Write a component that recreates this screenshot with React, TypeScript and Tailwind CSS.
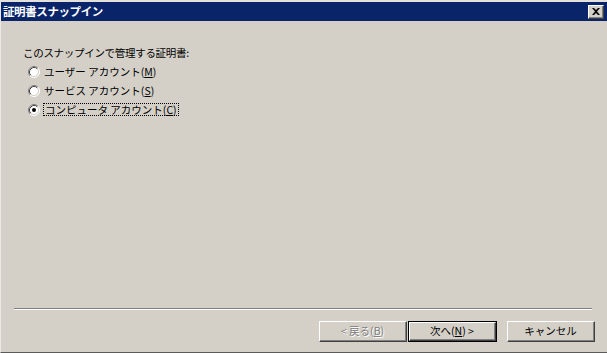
import React from "react";

const font = { fontFamily: '"Noto Sans CJK JP", "Noto Sans", sans-serif' };

function Radio({ checked }: { checked?: boolean }) {
  return (
    <svg width="12" height="12" viewBox="0 0 12 12" className="shrink-0">
      <circle cx="6" cy="6" r="5" fill="#ffffff" />
      <path d="M2.11 9.89 A5.5 5.5 0 0 1 9.89 2.11" fill="none" stroke="#808080" strokeWidth="1" />
      <path d="M9.89 2.11 A5.5 5.5 0 0 1 2.11 9.89" fill="none" stroke="#ffffff" strokeWidth="1" />
      <path d="M2.82 9.18 A4.5 4.5 0 0 1 9.18 2.82" fill="none" stroke="#404040" strokeWidth="1" />
      <path d="M9.18 2.82 A4.5 4.5 0 0 1 2.82 9.18" fill="none" stroke="#d4d0c8" strokeWidth="1" />
      {checked && <circle cx="6" cy="6" r="2" fill="#000" />}
    </svg>
  );
}

function Btn({
  children,
  isDefault,
  disabled,
}: {
  children: React.ReactNode;
  isDefault?: boolean;
  disabled?: boolean;
}) {
  const inner = (
    <div className="h-full w-full border-t border-l border-t-white border-l-white border-b border-r border-b-[#404040] border-r-[#404040]">
      <div
        className={
          "h-full w-full border-b border-r border-b-[#808080] border-r-[#808080] flex items-center justify-center text-[10.5px] leading-none " +
          (disabled ? "text-[#808080]" : "text-black")
        }
        style={disabled ? { ...font, textShadow: "1px 1px 0 #ffffff" } : font}
      >
        {children}
      </div>
    </div>
  );
  if (isDefault) {
    return <div className="w-[89px] h-[21px] border border-black">{inner}</div>;
  }
  return <div className="w-[88px] h-[21px]">{inner}</div>;
}

export default function App() {
  return (
    <div
      className="w-[607px] h-[353px] bg-[#d4d0c8] flex flex-col border-l border-l-[#ece9e4] border-t-2 border-t-[#e4e1dc] border-b border-b-[#5a5a5a] overflow-hidden"
      style={font}
    >
      {/* Title bar */}
      <div className="h-[19px] bg-[#0a246a] flex items-center pl-[2px] pr-[3px] shrink-0">
        <span className="text-white font-bold text-[11.5px] leading-none tracking-[-0.4px]" style={font}>
          証明書スナップイン
        </span>
        <div className="flex-1" />
        <div className="w-[16px] h-[14px] border-t border-l border-t-white border-l-white border-b border-r border-b-[#404040] border-r-[#404040] bg-[#d4d0c8]">
          <div className="w-full h-full border-b border-r border-b-[#808080] border-r-[#808080] flex items-center justify-center">
            <svg width="8" height="7" viewBox="0 0 8 7">
              <path d="M0 0h2l2 2 2-2h2L5 3.5 8 7H6L4 5 2 7H0l3-3.5z" fill="#000" />
            </svg>
          </div>
        </div>
      </div>

      {/* Content */}
      <div className="flex-1 flex flex-col pl-[22px] pt-[26px]">
        <div className="text-[10.5px] leading-[12px] text-black tracking-[-0.3px]">このスナップインで管理する証明書:</div>
        <div className="flex flex-col pl-[5px] mt-[3px]">
          <div className="h-[19px] flex items-center gap-[4px]">
            <Radio />
            <span className="text-[10.5px] leading-[12px] text-black">
              ユーザー アカウント(<span className="underline">M</span>)
            </span>
          </div>
          <div className="h-[19px] flex items-center gap-[4px]">
            <Radio />
            <span className="text-[10.5px] leading-[12px] text-black">
              サービス アカウント(<span className="underline">S</span>)
            </span>
          </div>
          <div className="h-[19px] flex items-center gap-[3px]">
            <Radio checked />
            <span className="text-[10.5px] leading-[11px] text-black border border-dotted border-black px-[1px]">
              コンピュータ アカウント(<span className="underline">C</span>)
            </span>
          </div>
        </div>
      </div>

      {/* Separator */}
      <div className="ml-[13px] mr-[15px] h-[2px] border-t border-t-[#808080] border-b border-b-white shrink-0" />

      {/* Buttons */}
      <div className="flex items-center justify-end pr-[12px] mt-[11px] mb-[10px] shrink-0">
        <Btn disabled>&lt; 戻る(<span className="underline">B</span>)</Btn>
        <div className="w-[1px]" />
        <Btn isDefault>
          次へ(<span className="underline">N</span>) &gt;
        </Btn>
        <div className="w-[10px]" />
        <Btn>キャンセル</Btn>
      </div>
    </div>
  );
}
